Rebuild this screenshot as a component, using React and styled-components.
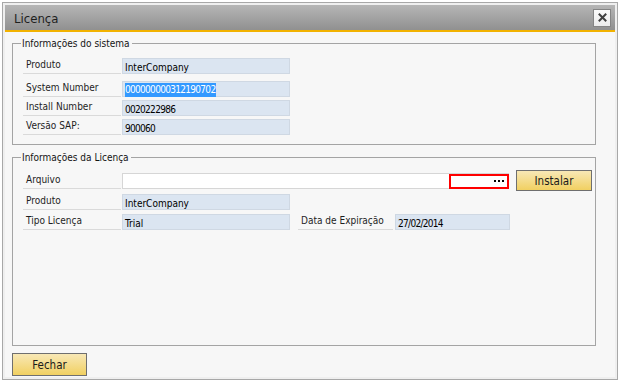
import React from "react";
import styled, { createGlobalStyle } from "styled-components";

const Global = createGlobalStyle`
  html, body { margin: 0; padding: 0; background: #ffffff; }
  body { font-family: "DejaVu Sans Condensed", "Liberation Sans", sans-serif; font-size: 10px; color: #1c1c1c; }
  * { box-sizing: border-box; }
`;

const Window = styled.div`
  margin: 2px 0 0 2px;
  width: 616px;
  height: 378px;
  border: 1px solid #a8a8a8;
  padding: 2px;
  background: #efefef;
  display: flex;
  flex-direction: column;
`;

const TitleBar = styled.div`
  height: 25px;
  flex: none;
  display: flex;
  align-items: center;
  justify-content: space-between;
  padding: 0 4px 0 9px;
  background: linear-gradient(#b6b6b6, #909090);
`;

const Title = styled.div`
  font-family: "DejaVu Sans Condensed", "Liberation Sans", sans-serif;
  font-size: 13px;
  color: #1e1e1e;
  padding-top: 1px;
`;

const CloseButton = styled.button`
  width: 18px;
  height: 18px;
  margin: 0;
  padding: 0;
  border: 1px solid #858585;
  background: linear-gradient(#fbfbfb, #ececec);
  display: flex;
  align-items: center;
  justify-content: center;
`;

const Accent = styled.div`
  height: 2px;
  flex: none;
  background: #f2b200;
`;

const Body = styled.div`
  flex: 1;
  background: #f7f7f7;
  padding: 11px 19px 0 7px;
  display: flex;
  flex-direction: column;
`;

const Group = styled.div`
  height: ${(p) => p.$h}px;
  margin-top: ${(p) => p.$mt || 0}px;
  border: 1px solid #a4a4a4;
  padding: 0 0 0 10px;
  display: flex;
  flex-direction: column;
`;

const Legend = styled.div`
  align-self: flex-start;
  margin: -7px 0 0 -2px;
  padding: 0 2px 0 1px;
  background: #f7f7f7;
  line-height: 13px;
  color: #141414;
`;

const Rows = styled.div`
  display: flex;
  flex-direction: column;
  margin-top: ${(p) => p.$mt}px;
`;

const Row = styled.div`
  display: flex;
  align-items: ${(p) => (p.$align ? p.$align : "stretch")};
  height: ${(p) => p.$h || 16}px;
  margin-bottom: ${(p) => p.$mb || 0}px;
`;

const Label = styled.div`
  width: ${(p) => p.$w}px;
  margin-left: ${(p) => p.$ml || 0}px;
  height: 16px;
  border-bottom: 1px solid #dadada;
  padding: 0 0 0 3px;
  line-height: 13px;
  color: #1e1e1e;
  white-space: nowrap;
`;

const Field = styled.div`
  width: ${(p) => p.$w}px;
  margin-left: ${(p) => (p.$ml === undefined ? 1 : p.$ml)}px;
  height: 16px;
  background: ${(p) => (p.$white ? "#ffffff" : "#dbe5f1")};
  border: 1px solid ${(p) => (p.$white ? "#d6d6d6" : "#cfd8e3")};
  padding: 0 0 0 2px;
  line-height: 15px;
  color: #000;
  white-space: nowrap;
  display: flex;
  align-items: stretch;
`;

const FieldText = styled.span`
  padding-top: 1px;
  letter-spacing: ${(p) => (p.$num ? "-0.7px" : "0")};
`;

const Selected = styled.span`
  background: #3399ff;
  color: #ffffff;
  line-height: 14px;
  align-self: center;
  margin-top: 1px;
  letter-spacing: -0.7px;
  padding-right: 1px;
`;

const Spacer = styled.div`
  flex: 1;
`;

const DotsBox = styled.div`
  width: 60px;
  margin: 0 -1px -1px 0;
  border: 2px solid #ff0000;
  display: flex;
  align-items: center;
  justify-content: flex-end;
  gap: 2px;
  padding: 0 3px 1px 0;
`;

const Dot = styled.span`
  width: 2px;
  height: 2px;
  background: #000;
`;

const YellowButton = styled.button`
  width: ${(p) => p.$w}px;
  height: ${(p) => p.$h}px;
  margin: 0 0 0 ${(p) => p.$ml || 0}px;
  padding: 0;
  border: 1px solid #6f6f6f;
  background: linear-gradient(#f8e8b6, #f1d061);
  font-family: "DejaVu Sans Condensed", "Liberation Sans", sans-serif;
  font-size: 11.5px;
  color: #1a1a1a;
  flex: none;
`;

const Footer = styled.div`
  margin: 7px 0 0 0;
  display: flex;
`;

const CloseIcon = () => (
  <svg width="9" height="9" viewBox="0 0 9 9">
    <path d="M1.5 1.5 L7.5 7.5 M7.5 1.5 L1.5 7.5" stroke="#404040" strokeWidth="2" strokeLinecap="square" />
  </svg>
);

export default function App() {
  return (
    <>
      <Global />
      <Window>
        <TitleBar>
          <Title>Licença</Title>
          <CloseButton aria-label="Fechar">
            <CloseIcon />
          </CloseButton>
        </TitleBar>
        <Accent />
        <Body>
          <Group $h={102}>
            <Legend>Informações do sistema</Legend>
            <Rows $mt={8}>
              <Row $mb={7}>
                <Label $w={98}>Produto</Label>
                <Field $w={168}><FieldText>InterCompany</FieldText></Field>
              </Row>
              <Row $mb={3}>
                <Label $w={98}>System Number</Label>
                <Field $w={168}><Selected>000000000312190702</Selected></Field>
              </Row>
              <Row $mb={3}>
                <Label $w={98}>Install Number</Label>
                <Field $w={168}><FieldText $num>0020222986</FieldText></Field>
              </Row>
              <Row>
                <Label $w={98}>Versão SAP:</Label>
                <Field $w={168}><FieldText $num>900060</FieldText></Field>
              </Row>
            </Rows>
          </Group>
          <Group $h={189} $mt={12}>
            <Legend>Informações da Licença</Legend>
            <Rows $mt={6}>
              <Row $h={21} $mb={3} $align="center">
                <Label $w={98}>Arquivo</Label>
                <Field $w={387} $white>
                  <Spacer />
                  <DotsBox>
                    <Dot />
                    <Dot />
                    <Dot />
                  </DotsBox>
                </Field>
                <YellowButton $w={76} $h={21} $ml={7}>Instalar</YellowButton>
              </Row>
              <Row $mb={4}>
                <Label $w={98}>Produto</Label>
                <Field $w={168}><FieldText>InterCompany</FieldText></Field>
              </Row>
              <Row>
                <Label $w={98}>Tipo Licença</Label>
                <Field $w={168}><FieldText>Trial</FieldText></Field>
                <Label $w={95} $ml={8}>Data de Expiração</Label>
                <Field $w={115} $ml={2}><FieldText $num>27/02/2014</FieldText></Field>
              </Row>
            </Rows>
          </Group>
          <Footer>
            <YellowButton $w={75} $h={23}>Fechar</YellowButton>
          </Footer>
        </Body>
      </Window>
    </>
  );
}
